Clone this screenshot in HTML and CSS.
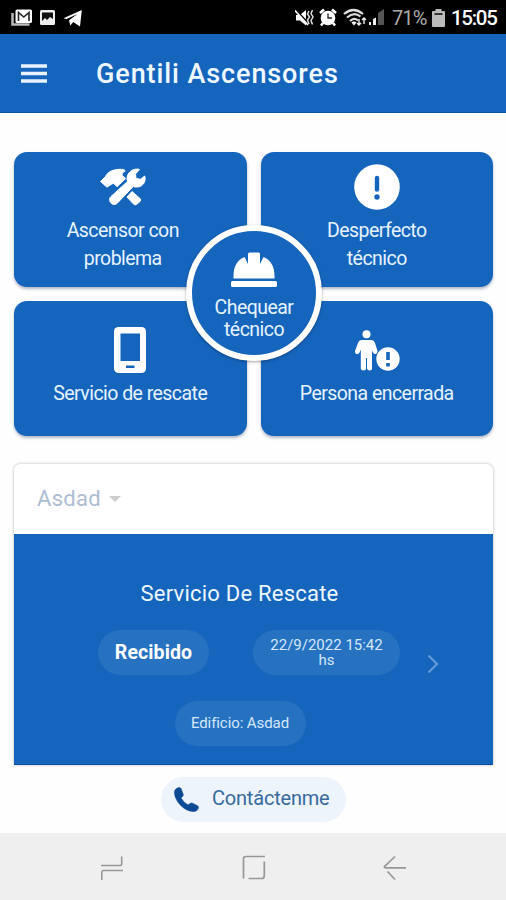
FILE: index.html
```html
<!DOCTYPE html>
<html lang="es">
<head>
<meta charset="utf-8">
<meta name="viewport" content="width=device-width, initial-scale=1">
<title>Gentili Ascensores</title>
<link rel="stylesheet" href="styles.css">
</head>
<body>
<div class="screen">
  <div class="status">
    <svg class="status-left" width="72" height="20" viewBox="0 0 72 20">
      <path d="M1.500 4v11.500h17" fill="none" stroke="#bbb" stroke-width="2.500"/>
      <rect x="4.500" y=".5" width="16.500" height="13.500" rx="1.500" fill="#fff"/>
      <path d="M7.500 12V3.500l5.300 4.500 5.200-4.500V12" fill="none" stroke="#222" stroke-width="1.600"/>
      <rect x="29" y="1" width="15" height="15" rx="1.500" fill="#eee"/>
      <path d="M31 3.500h11v6.500l-3-2-3 3-2-2-3 3z" fill="#111"/>
      <path d="M52.500 9.200 70.800 1 69 17.500l-6.700-4.500-3 3.500-1.300-5.200L66.500 5l-10.800 5z" fill="#fff"/>
    </svg>
    <div class="status-right">
      <svg width="91" height="20" viewBox="0 0 91 20">
        <path d="M1 7h4l6-5v15.500l-6-5H1z" fill="#fff"/>
        <path d="M1 2.500 14 16" stroke="#000" stroke-width="2"/>
        <path d="M0 2.500 13 17" stroke="#fff" stroke-width="1.800"/>
        <path d="m14 3-1.500 3 2 3-2 3 1.500 4M17.500 2 16 5.500l2 3.500-2 3.500 1.500 4" fill="none" stroke="#ddd" stroke-width="1.500"/>
        <circle cx="33" cy="10" r="7.300" fill="#fff"/>
        <path d="m25 5 4-3.500M41 5l-4-3.500M28 15l-2 2.500M38 15l2 2.500" stroke="#fff" stroke-width="2.600"/>
        <path d="M33 5.500V10h4" fill="none" stroke="#222" stroke-width="1.300"/>
        <path d="M49 6q9.500-8 19 0M52 9.500q7-6 13.500-1M55 13q4-4 8-.500" fill="none" stroke="#ddd" stroke-width="2.200"/>
        <path d="m56.500 14.500 2.500 3 2.500-3q-2.500-2-5 0z" fill="#fff"/>
        <path d="M64 11v6m-2-2 2 2 2-2M69 16v-6m-2 2 2-2 2 2" stroke="#eee" stroke-width="1.400" fill="none"/>
        <path d="M74 17v-3h2v3zM78 17v-6l3-1.500V17z" fill="#eee"/>
        <path d="M83 17V5l6-4v16z" fill="#555"/>
      </svg>
      <span class="percent">71%</span>
      <svg class="battery" width="13" height="18" viewBox="0 0 13 18"><path d="M3.500 0h6v2H12q1 0 1 1v14q0 1-1 1H1q-1 0-1-1V3q0-1 1-1h2.500z" fill="#bbb"/><path d="M2.500 4h8v2h-8z" fill="#333"/></svg>
      <span class="time">15:05</span>
    </div>
  </div>

  <header class="appbar">
    <svg class="menu" width="26" height="19" viewBox="0 0 26 19"><path d="M0 2h26M0 9.500h26M0 17h26" stroke="#e8f3ff" stroke-width="3.400"/></svg>
    <h1 class="title">Gentili Ascensores</h1>
  </header>

  <main class="main">
    <section class="actions">
      <div class="card card-first">
        <svg class="tools" width="46" height="38" viewBox="0 0 46 38">
          <path d="M.5 13.500 5.500 8.500C8 3 15 1 21.500 1.300c3 .2 4 1.200 3.500 2-2.500.8-3.500 2.500-2.500 4.400l3 3-8.500 8-3.500-3.500-2 1-4.500 3z" fill="#fff" stroke="#fff" stroke-linejoin="round"/>
          <path d="M44.700 8c1.600 5-1.500 10.500-7 11-2 .2-3.500 0-4.500-.500L17.500 35c-2 2-4.500 2-6.500 0s-2-4.500 0-6.500L27.500 13.500C25.500 7.500 30 1 37.500 1L39.500 1.500l-4 4.500.5 4.500 4.500.700z" fill="#fff" stroke="#fff" stroke-linejoin="round"/>
          <path d="m32 23.500 8 7q1.500 1.500 0 3l-3.500 3q-1.500 1-3-.500L27 29z" fill="#fff" stroke="#fff"/>
        </svg>
        <span class="label">Ascensor con<br>problema</span>
      </div>
      <div class="card">
        <svg class="alert" width="46" height="46" viewBox="0 0 46 46"><circle cx="23" cy="23" r="22.800" fill="#fff"/><path d="M23 14v11.500" stroke="#1565bd" stroke-width="4.400" stroke-linecap="round"/><circle cx="23" cy="33" r="2.700" fill="#1565bd"/></svg>
        <span class="label">Desperfecto<br>técnico</span>
      </div>
      <div class="card">
        <svg class="phone-device" width="32" height="46" viewBox="0 0 32 46"><rect width="32" height="46" rx="4.500" fill="#fff"/><path d="M6.500 6.500h19.500V34H6.500zM12 38.500h8.500v2.500H12z" fill="#1565bd"/></svg>
        <span class="label">Servicio de rescate</span>
      </div>
      <div class="card">
        <svg class="person" width="46" height="42" viewBox="0 0 46 42">
          <circle cx="12.500" cy="4.300" r="4" fill="#fff"/>
          <path d="M8 10h9q3 0 4 3l2.500 8q.5 2.500-1.500 3t-3-1.500l-1-2V38.500q0 2-2.300 2t-2.700-2V28h-1v10.500q0 2-2.500 2t-2.700-2V19.500l-1.300 3q-1 2-3 1.500t-1.500-3L4 13q1-3 4-3z" fill="#fff"/>
          <circle cx="34" cy="29" r="12.500" fill="#1565bd"/><circle cx="34" cy="29" r="11.700" fill="#fff"/>
          <path d="M34 22v8M34 33v3.500" stroke="#1565bd" stroke-width="3.600"/>
        </svg>
        <span class="label">Persona encerrada</span>
      </div>
      <div class="check">
        <svg width="46" height="36" viewBox="0 0 46 36"><path d="M2.500 26.500C2 15 6 8 13.500 5l3.500 7V2q0-1.500 1.500-1.500h9Q29 .500 29 2v10l3.500-7C40 8 44 15 43.500 26.500z" fill="#fff"/><rect y="29" width="46" height="6" rx="1.500" fill="#fff"/></svg>
        <span class="check-label">Chequear<br>técnico</span>
      </div>
    </section>

    <section class="panel">
      <div class="select"><span class="select-text">Asdad</span><i class="caret"></i></div>
      <div class="request">
        <h2 class="request-title">Servicio De Rescate</h2>
        <div class="request-row">
          <span class="chip state">Recibido</span>
          <span class="chip date">22/9/2022 15:42<br>hs</span>
          <svg class="chevron" width="12" height="20" viewBox="0 0 12 20"><path d="m1.500 1.500 8.500 8.500-8.500 8.500" fill="none" stroke="#6299d6" stroke-width="2.200"/></svg>
        </div>
        <span class="chip building">Edificio: Asdad</span>
      </div>
    </section>

    <div class="contact">
      <svg width="25" height="25" viewBox="0 0 25 25"><path d="M5 .500q-5 1-4.500 6C1.500 15 10 24 19 24.500q4.500.300 5.500-4 .2-1.200-1-1.800l-5-2.500q-1.500-.5-2.500.3L14 18Q9.500 15.500 7 11l1.800-1.800q.8-.8.4-2L7 1.600Q6.300.300 5 .500z" fill="#0d4a94" stroke="#0d4a94" stroke-width=".6"/></svg>
      <span class="contact-text">Contáctenme</span>
    </div>
  </main>

  <nav class="navbar">
    <svg width="24" height="26" viewBox="0 0 24 26"><path d="M1 10.500h19q1.700 0 1.700-1.700V1.500M23 15.500H3.500q-1.700 0-1.700 1.700V25" fill="none" stroke="#979797" stroke-width="1.600"/></svg>
    <svg width="24" height="25" viewBox="0 0 24 25"><path d="M23 1.500H4Q1.500 1.500 1.500 4v19.500M6.500 23.500h13q2.800 0 2.800-2.800V6.500" fill="none" stroke="#979797" stroke-width="1.700"/></svg>
    <svg width="24" height="26" viewBox="0 0 24 26"><path d="M12 1.500 1.700 11.300q-1 1.500.8 1.500H23M4.500 16.500l7.500 8" fill="none" stroke="#979797" stroke-width="1.700"/></svg>
  </nav>
</div>
</body>
</html>
```

FILE: styles.css
```css
* { box-sizing: border-box; }
body { margin: 0; background: #fefefe; font-family: Roboto, "Liberation Sans", sans-serif; }
svg { display: block; flex: none; }
.screen { width: 506px; height: 900px; display: flex; flex-direction: column; overflow: hidden; }

.status { height: 34px; background: #000; display: flex; justify-content: space-between; padding: 0 10px 0 11px; flex: none; }
.status-left { margin-top: 9px; }
.status-right { display: flex; align-items: center; color: #fff; white-space: nowrap; padding-top: 1px; }
.percent { width: 37px; margin-left: 6px; font-size: 20px; color: #aaa; letter-spacing: -.9px; padding-top: 1px; }
.battery { margin: 0 6px 0 3px; }
.time { width: 45px; font-size: 20.5px; font-weight: 500; letter-spacing: -1.3px; padding-top: 1px; }

.appbar { height: 79px; background: #1565bd; border-bottom: 1px solid #0c4f9d; display: flex; align-items: center; padding-left: 21px; flex: none; }
.menu { margin-top: 1px; }
.title { margin: 0 0 0 49px; color: #eff8ff; font-size: 27px; font-weight: 500; letter-spacing: .9px; line-height: 32px; white-space: nowrap; padding-top: 1px; }

.main { flex: 1; display: flex; flex-direction: column; align-items: center; padding: 39px 13px 0 14px; }
.actions { position: relative; width: 479px; display: grid; grid-template-columns: 1fr 1fr; grid-template-rows: 135px 135px; gap: 14px; }
.card { background: #1565bd; border-radius: 13px; box-shadow: 0 2px 3px rgba(30, 50, 90, .35); display: flex; flex-direction: column; align-items: center; color: #e6f3ff; }
.card-first { padding-right: 15px; }
.label { font-size: 19.5px; line-height: 28px; letter-spacing: -.55px; text-align: center; white-space: nowrap; padding-top: 1px; }
.tools { margin: 16px 0 10px; }
.alert { margin: 12px 0 6px; }
.phone-device { margin: 26px 0 6px; }
.person { margin: 29px 0 7px; }
.check { position: absolute; left: 172px; top: 73px; width: 136px; height: 136px; border: 6px solid #fff; border-radius: 50%; background: #1565bd; box-shadow: 0 1px 3px rgba(0, 0, 0, .35); display: flex; flex-direction: column; align-items: center; padding-top: 21px; color: #e6f3ff; }
.check-label { margin-top: 9px; font-size: 19.5px; line-height: 21.5px; letter-spacing: -.55px; text-align: center; }

.panel { width: 479px; margin-top: 28px; border-radius: 6px 6px 0 0; box-shadow: 0 0 3px rgba(0, 0, 0, .3); background: #fff; }
.select { height: 70px; display: flex; align-items: center; padding: 0 0 2px 23px; }
.select-text { font-size: 22px; color: #aebdd3; letter-spacing: .3px; }
.caret { margin: 2px 0 0 8px; border: 6px solid transparent; border-top-color: #cdcdcd; border-bottom: 0; }
.request { height: 231px; background: #1565bd; border-bottom: 1px solid #0c4f9d; display: flex; flex-direction: column; align-items: center; padding-top: 46px; }
.request-title { margin: 0; color: #edf7ff; font-size: 22px; font-weight: 400; letter-spacing: .22px; line-height: 28px; padding-right: 28px; white-space: nowrap; }
.request-row { width: 100%; display: flex; align-items: center; padding-left: 84px; margin-top: 22px; }
.chip { height: 45px; border-radius: 23px; background: #2672c1; color: #d5e7fa; display: flex; align-items: center; justify-content: center; text-align: center; white-space: nowrap; }
.state { width: 111px; color: #fff; font-size: 19.5px; font-weight: 700; letter-spacing: .1px; }
.date { display: block; width: 147px; margin-left: 44px; padding-top: 8px; font-size: 15px; line-height: 15px; }
.chevron { margin: 23px 0 0 27px; }
.building { width: 131px; margin: 26px 27px 0 0; padding-bottom: 2px; font-size: 15px; letter-spacing: -.08px; }

.contact { width: 185px; height: 45px; margin-top: 12px; border-radius: 23px; background: #edf4fc; display: flex; align-items: center; padding-left: 13px; gap: 13px; }
.contact-text { color: #386a9f; font-size: 20px; letter-spacing: -.2px; white-space: nowrap; padding-bottom: 3px; }

.navbar { height: 67px; flex: none; background: #efefef; display: flex; align-items: center; justify-content: space-between; padding: 2px 99px 0 100px; }
```
